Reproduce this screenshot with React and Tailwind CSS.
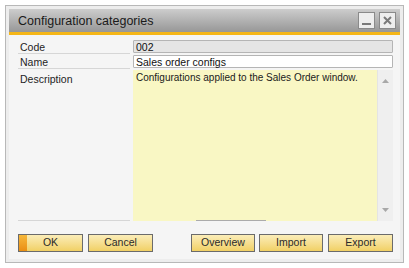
import React from 'react';

const font = { fontFamily: '"Liberation Sans", Arial, sans-serif' };

const Btn = ({ children, primary, className = '' }) => (
  <div
    className={`relative flex h-[18px] items-center justify-center border border-[#6b6b6b] bg-gradient-to-b from-[#fbedb8] to-[#f1d063] text-[10.5px] text-[#2a2a2a] ${className}`}
  >
    {primary && <div className="absolute left-0 top-0 h-full w-[8px] bg-gradient-to-b from-[#f6b83a] to-[#ea8e12]" />}
    <span className="relative">{children}</span>
  </div>
);

const Row = ({ label, children, className = '' }) => (
  <div className={`flex gap-[3px] ${className}`}>
    <div className="w-[112px] border-b border-[#d6d6d6] pl-[2px] pt-[1px] text-[10.5px] leading-[12px] text-[#1e1e1e]">{label}</div>
    {children}
  </div>
);

export default function App() {
  return (
    <div className="h-[268px] w-[409px] bg-white p-[5px]" style={font}>
      <div className="flex h-[258px] w-[399px] flex-col border border-[#b8b8b8] bg-[#ededed] p-[3px]">
        <div className="flex h-[23px] items-center justify-between bg-gradient-to-b from-[#cdcdcd] to-[#979797] pl-[9px] pr-[4px]">
          <span className="pt-[2px] text-[12.5px] text-[#1a1a1a]">Configuration categories</span>
          <div className="flex gap-[4px]">
            <div className="flex h-[17px] w-[17px] items-end justify-center border border-[#8a8a8a] bg-[#eeeeee] pb-[3px]">
              <div className="h-[2px] w-[9px] bg-[#7a7a7a]" />
            </div>
            <div className="flex h-[17px] w-[17px] items-center justify-center border border-[#8a8a8a] bg-[#eeeeee]">
              <svg width="9" height="9" viewBox="0 0 9 9">
                <path d="M1 1 L8 8 M8 1 L1 8" stroke="#7a7a7a" strokeWidth="2" />
              </svg>
            </div>
          </div>
        </div>
        <div className="h-[3px] bg-[#f5b618]" />
        <div className="flex flex-1 flex-col bg-[#f5f5f5] pl-[9px] pr-[7px] pt-[5px]">
          <Row label="Code">
            <div className="h-[13px] flex-1 rounded-[1px] border border-[#b5b5b5] bg-[#e5e5e5] pl-[2px] text-[10.5px] leading-[12px] text-[#111]">002</div>
          </Row>
          <Row label="Name" className="mt-[1px]">
            <div className="h-[13px] flex-1 rounded-[1px] border border-[#b5b5b5] bg-white pl-[2px] text-[10.5px] leading-[12px] text-[#111]">Sales order configs</div>
          </Row>
          <Row label={<div className="pt-[2px]">Description</div>} className="mt-[1px]">
            <div className="relative flex h-[151px] flex-1 bg-[#f9f7c4]">
              <div className="flex-1 pl-[3px] pt-[2px] text-[10px] leading-[12px] text-[#1a1a1a]">
                Configurations applied to the Sales Order window.
              </div>
              <div className="flex w-[16px] flex-col items-center justify-between border-l border-[#e4e4e4] bg-[#efefef] py-[9px]">
                <svg width="7" height="4" viewBox="0 0 7 4"><path d="M0 4 L3.5 0 L7 4 Z" fill="#a8a8a8" /></svg>
                <svg width="7" height="4" viewBox="0 0 7 4"><path d="M0 0 L3.5 4 L7 0 Z" fill="#a8a8a8" /></svg>
              </div>
              <div className="absolute bottom-0 left-[63px] h-[1px] w-[70px] bg-[#ababab]" />
            </div>
          </Row>
          <div className="mt-[13px] flex">
            <Btn primary className="w-[65px]">OK</Btn>
            <Btn className="ml-[5px] w-[65px]">Cancel</Btn>
            <Btn className="ml-[38px] w-[64px]">Overview</Btn>
            <Btn className="ml-[4px] w-[64px]">Import</Btn>
            <Btn className="ml-[5px] w-[65px]">Export</Btn>
          </div>
        </div>
      </div>
    </div>
  );
}
